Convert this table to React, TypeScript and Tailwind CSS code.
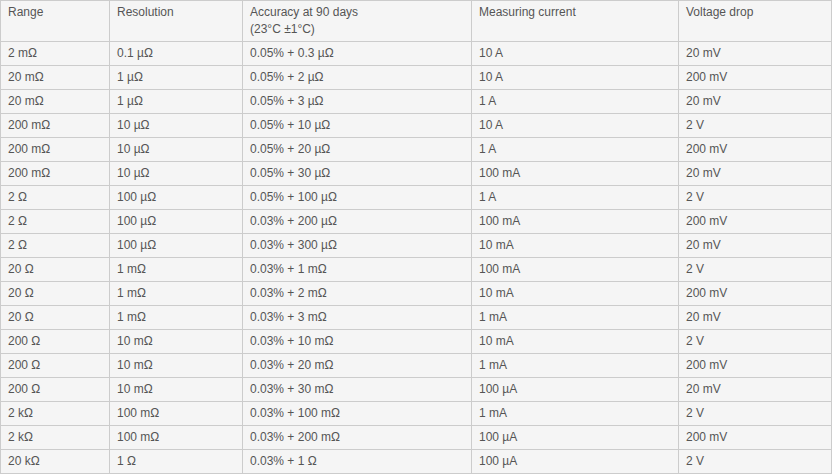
const header = ["Range", "Resolution", "Accuracy at 90 days", "Measuring current", "Voltage drop"];

const rows: string[][] = [
  ["2 mΩ", "0.1 µΩ", "0.05% + 0.3 µΩ", "10 A", "20 mV"],
  ["20 mΩ", "1 µΩ", "0.05% + 2 µΩ", "10 A", "200 mV"],
  ["20 mΩ", "1 µΩ", "0.05% + 3 µΩ", "1 A", "20 mV"],
  ["200 mΩ", "10 µΩ", "0.05% + 10 µΩ", "10 A", "2 V"],
  ["200 mΩ", "10 µΩ", "0.05% + 20 µΩ", "1 A", "200 mV"],
  ["200 mΩ", "10 µΩ", "0.05% + 30 µΩ", "100 mA", "20 mV"],
  ["2 Ω", "100 µΩ", "0.05% + 100 µΩ", "1 A", "2 V"],
  ["2 Ω", "100 µΩ", "0.03% + 200 µΩ", "100 mA", "200 mV"],
  ["2 Ω", "100 µΩ", "0.03% + 300 µΩ", "10 mA", "20 mV"],
  ["20 Ω", "1 mΩ", "0.03% + 1 mΩ", "100 mA", "2 V"],
  ["20 Ω", "1 mΩ", "0.03% + 2 mΩ", "10 mA", "200 mV"],
  ["20 Ω", "1 mΩ", "0.03% + 3 mΩ", "1 mA", "20 mV"],
  ["200 Ω", "10 mΩ", "0.03% + 10 mΩ", "10 mA", "2 V"],
  ["200 Ω", "10 mΩ", "0.03% + 20 mΩ", "1 mA", "200 mV"],
  ["200 Ω", "10 mΩ", "0.03% + 30 mΩ", "100 µA", "20 mV"],
  ["2 kΩ", "100 mΩ", "0.03% + 100 mΩ", "1 mA", "2 V"],
  ["2 kΩ", "100 mΩ", "0.03% + 200 mΩ", "100 µA", "200 mV"],
  ["20 kΩ", "1 Ω", "0.03% + 1 Ω", "100 µA", "2 V"],
];

const widths = ["w-[109px]", "w-[133px]", "w-[229px]", "w-[207px]", "w-[153px]"];

export default function App() {
  return (
    <div className="w-[832px] h-[475px] bg-white font-['Liberation_Sans',Arial,sans-serif] text-[12px] leading-[17px] text-[#555]">
      <table className="w-[832px] table-fixed border-collapse bg-[#f5f5f5]">
        <colgroup>
          {widths.map((w, i) => (
            <col key={i} className={w} />
          ))}
        </colgroup>
        <thead>
          <tr className="h-[41px]">
            {header.map((h, i) => (
              <th
                key={h}
                className="border border-[#cccccc] px-[7px] pt-[3px] pb-[3px] text-left align-top font-normal"
              >
                {h}
                {i === 2 && (
                  <>
                    <br />
                    (23°C ±1°C)
                  </>
                )}
              </th>
            ))}
          </tr>
        </thead>
        <tbody>
          {rows.map((r, ri) => (
            <tr key={ri} className="h-[24px]">
              {r.map((c, ci) => (
                <td key={ci} className="border border-[#cccccc] px-[7px] py-[3px] align-top">
                  {c}
                </td>
              ))}
            </tr>
          ))}
        </tbody>
      </table>
    </div>
  );
}
